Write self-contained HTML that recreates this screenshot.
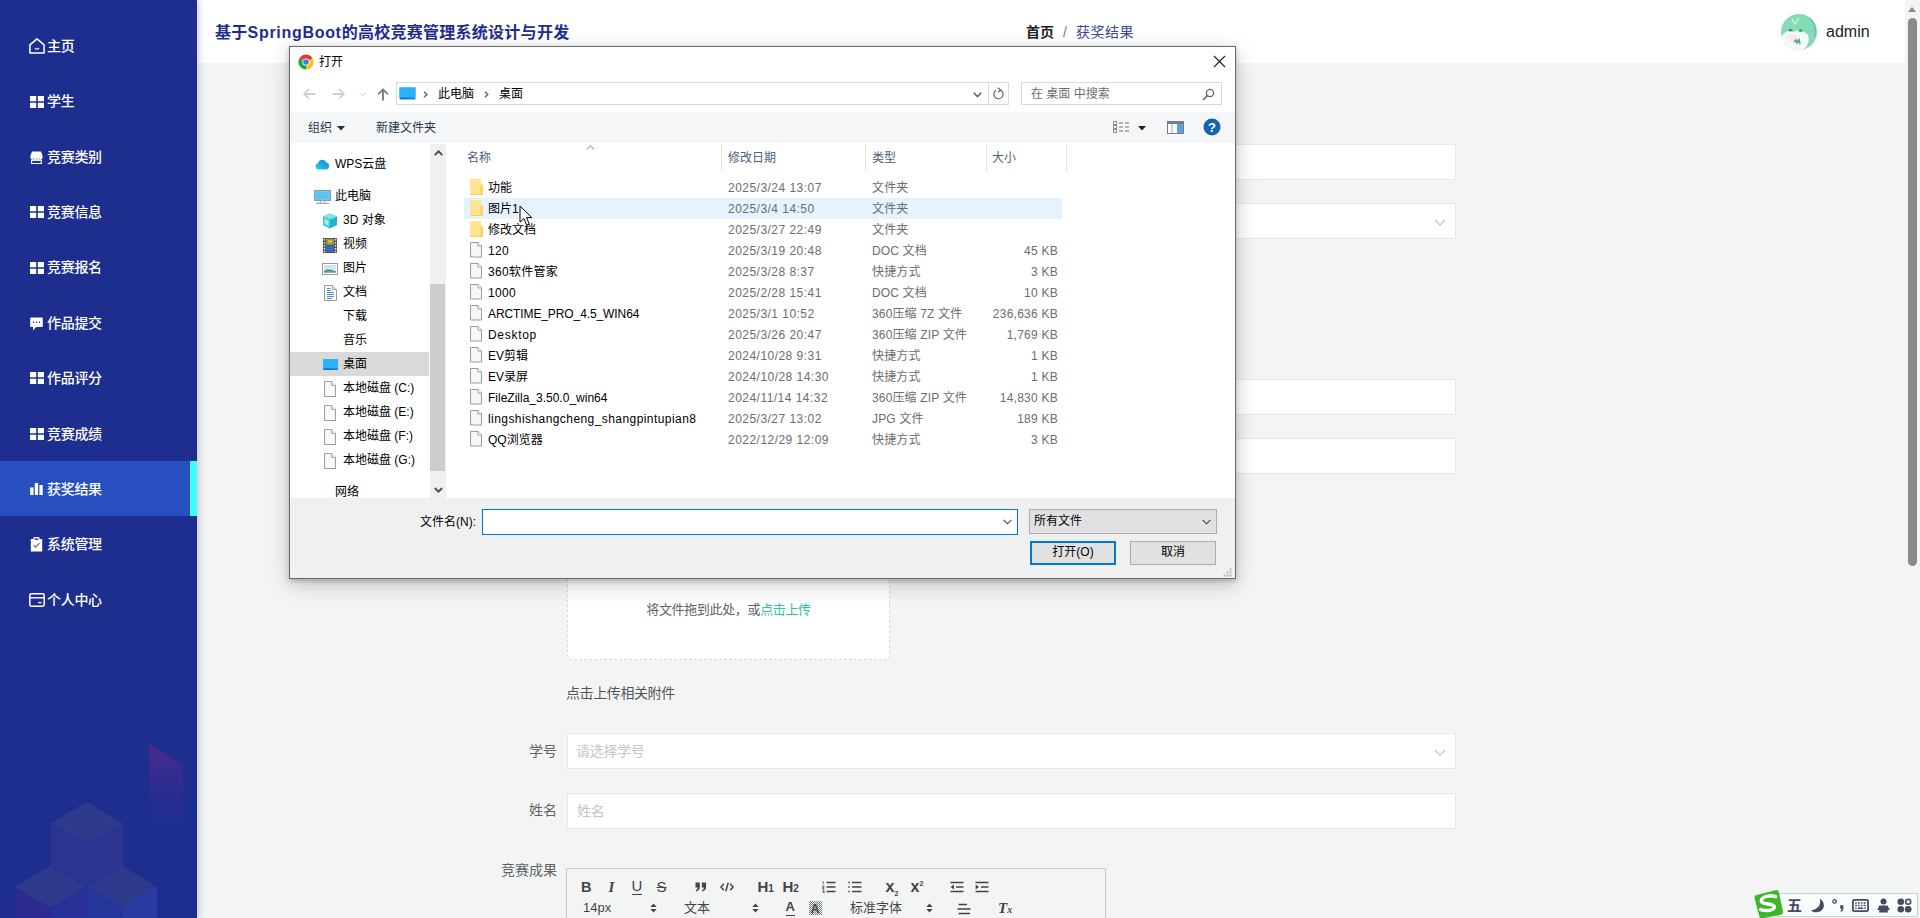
<!DOCTYPE html>
<html lang="zh-CN">
<head>
<meta charset="utf-8">
<title>获奖结果</title>
<style>
*{box-sizing:border-box;margin:0;padding:0}
html,body{width:1920px;height:918px;overflow:hidden;background:#f3f5f5;font-family:"Liberation Sans","Noto Sans CJK SC",sans-serif;}
body{position:relative}
/* ---------- sidebar ---------- */
#side{position:absolute;left:0;top:0;width:197px;height:918px;background:#1e2e8f;overflow:hidden;z-index:3}
#sshadow{position:absolute;left:0;top:0;width:197px;height:918px;box-shadow:2px 0 7px rgba(0,21,41,.2);z-index:3}
#side .mi{position:absolute;left:0;width:197px;height:55px;color:#fff;font-size:14px;line-height:55px;font-weight:500;white-space:nowrap;letter-spacing:-0.3px}
#side .mi svg{position:absolute;fill:#fff}
#side .mi span{position:absolute;left:47px;top:0}
#side .mi.on{background:#274fbf}
#side .mi.on:after{content:"";position:absolute;right:0;top:0;width:7px;height:55px;background:#3dfffb}
/* ---------- header ---------- */
#head{position:absolute;left:197px;top:0;width:1708px;height:63px;background:#fff;z-index:2}
#head .title{position:absolute;left:18px;top:0;line-height:65px;font-size:16px;font-weight:bold;color:#1e2e8f;white-space:nowrap;letter-spacing:.27px}
#head .bc{position:absolute;left:829px;top:0;line-height:64px;font-size:14px;white-space:nowrap;color:#303133}
#head .bc b{font-weight:bold;color:#222}
#head .bc i{font-style:normal;color:#777;margin:0 9px 0 9px}
#head .bc em{font-style:normal;color:#3f4898;letter-spacing:.55px}
#head .user{position:absolute;left:1629px;top:0;line-height:64px;font-size:16px;color:#222}
#head .ava{position:absolute;left:1584px;top:14px;width:36px;height:36px}
/* ---------- page scrollbar ---------- */
#sb{position:absolute;left:1905px;top:0;width:15px;height:918px;background:#f4f4f4;z-index:2}
#sb .th{position:absolute;left:3px;top:18px;width:9px;height:548px;border-radius:5px;background:#8a8a8a}
#sb .up{position:absolute;left:3px;top:7px;width:0;height:0;border-left:4.5px solid transparent;border-right:4.5px solid transparent;border-bottom:5px solid #8a8a8a}
/* ---------- form ---------- */
.inp{position:absolute;left:567px;width:889px;height:36px;background:#fff;border:1px solid #e6e9ec;font-size:14px;color:#c3c6cc;line-height:34px;padding-left:9px;letter-spacing:-0.3px}
.lbl{position:absolute;width:120px;text-align:right;font-size:14px;color:#606266;line-height:36px;white-space:nowrap}
.chev{position:absolute;right:9px;top:15px;width:12px;height:7px}

.drag{position:absolute;left:567px;top:480px;width:323px;height:180px;background:#fff;border:1px dashed #d9d9d9;border-radius:6px;text-align:center;font-size:13px;color:#606266}
.drag span{position:absolute;left:0;width:321px;top:120px;line-height:18px;letter-spacing:-0.35px}
.drag em{font-style:normal;color:#2fc49a}
.tip{position:absolute;left:566px;top:683px;font-size:14px;line-height:20px;color:#555;letter-spacing:-0.4px}
#ed{position:absolute;left:566px;top:868px;width:540px;height:60px;border:1px solid #ccc}
#ed svg{position:absolute}
#ed span{position:absolute;font-size:14px;color:#444;line-height:20px;white-space:nowrap}
#ed small{font-size:10px}
#ed sub,#ed sup{font-size:7px;line-height:0}
#ime{position:absolute;left:1777px;top:893px;width:141px;height:24px;background:#f9fcfc;border:1px solid #c5d3d8;z-index:4}
#ime svg,#ime span{position:absolute}
/* ---------- dialog ---------- */
#dlg{position:absolute;left:289px;top:46px;width:947px;height:533px;background:#fff;border:1px solid #6b6b6b;box-shadow:0 2px 5px rgba(0,0,0,.22),0 6px 20px rgba(0,0,0,.2);z-index:10;font-size:12px;color:#000;font-family:"Liberation Sans","Noto Sans CJK SC",sans-serif}
#dlg *{position:absolute;white-space:nowrap}
#dlg .ttl{left:29px;top:6px;line-height:18px;font-size:12px}
#dlg .addr{left:106px;top:35px;width:593px;height:23px;border:1px solid #d9d9d9;background:#fff}
#dlg .rfr{left:698px;top:35px;width:21px;height:23px;border:1px solid #d9d9d9;background:#fff}
#dlg .srch{left:731px;top:35px;width:201px;height:23px;border:1px solid #d9d9d9;background:#fff}
#dlg .srch span{left:9px;top:2px;line-height:18px;color:#6d6d6d}
#dlg .tb{left:0;top:65px;width:945px;height:31px;background:#f5f6f7}
#dlg .tb span{top:7px;line-height:18px;color:#27364f}
#dlg .tree{left:0;top:97px;width:140px;height:354px;overflow:hidden;background:#fff}
#dlg .ti{left:0;width:139px;height:24px;line-height:23px}
#dlg .ti.sel{background:#d9d9d9;box-shadow:0 -1px 0 #d9d9d9;height:23px}
#dlg .ti span{top:0}
#dlg .tsb{left:140px;top:97px;width:16px;height:354px;background:#f0f0f0}
#dlg .tsb .th{left:0;top:140px;width:15px;height:187px;background:#cdcdcd}
#dlg .hdr{top:98px;height:28px;line-height:26px;color:#4c607a}
#dlg .sep{top:97px;width:1px;height:28px;background:#e5e5e5}
#dlg .row{left:174px;width:598px;height:21px;line-height:22px}
#dlg .row.hl{background:#e5f3ff}
#dlg .row .ic{left:6px;top:2px;width:13px;height:16px}
#dlg .row .n{left:24px;top:0;color:#000}
#dlg .row .d{left:264px;top:0;color:#6d6d6d;letter-spacing:.47px}
#dlg .row .t{left:408px;top:0;color:#6d6d6d;letter-spacing:.15px}
#dlg .row .s{right:4px;top:0;color:#6d6d6d;letter-spacing:.25px}
#dlg .bot{left:0;top:451px;width:945px;height:80px;background:#f0f0f0}
#dlg .fnl{left:130px;top:466px;line-height:18px}
#dlg .fni{left:192px;top:462px;width:536px;height:26px;border:1px solid #0078d7;background:#fff}
#dlg .flt{left:739px;top:462px;width:188px;height:25px;border:1px solid #adadad;background:#e1e1e1}
#dlg .flt span{left:4px;top:2px;line-height:18px}
#dlg .btn{top:494px;width:86px;height:24px;background:#e1e1e1;border:1px solid #adadad;text-align:center;line-height:21px}
#dlg .btn.def{border:2px solid #0078d7;line-height:19px}
</style>
</head>
<body>
<!-- SIDEBAR -->
<div id="sshadow"></div>
<div id="side">
  <div class="mi" style="top:18.5px"><svg viewBox="0 0 16 16" style="left:29px;top:19.5px;width:16px;height:16px"><path d="M8 0.9L0.9 6.9V15.1H15.1V6.9Z" fill="none" stroke="#fff" stroke-width="1.5" stroke-linejoin="round"/><path d="M6.2 10.4Q8 11.8 9.8 10.4" fill="none" stroke="#fff" stroke-width="1.2" stroke-linecap="round"/></svg><span>主页</span></div>
  <div class="mi" style="top:74px"><svg viewBox="0 0 14 12" style="left:30px;top:21.5px;width:14px;height:12px"><path d="M0 0h6.2v5.2H0zM7.8 0H14v5.2H7.8zM0 6.8h6.2V12H0zM7.8 6.8H14V12H7.8z"/></svg><span>学生</span></div>
  <div class="mi" style="top:129.5px"><svg viewBox="0 0 13 13" style="left:30px;top:21px;width:13px;height:13px"><path d="M2 0.5h9l1.6 4.2v2.1a1.6 1.6 0 0 1-3.1 0.4a1.6 1.6 0 0 1-3 0a1.6 1.6 0 0 1-3 0a1.6 1.6 0 0 1-3.1-0.4V4.7z"/><path d="M1.6 9.2h9.8v3.3H1.6z" fill="none" stroke="#fff" stroke-width="1.2"/><path d="M2.2 8.4h8.6v1.2H2.2z"/></svg><span>竞赛类别</span></div>
  <div class="mi" style="top:184.5px"><svg viewBox="0 0 14 12" style="left:30px;top:21.5px;width:14px;height:12px"><path d="M0 0h6.2v5.2H0zM7.8 0H14v5.2H7.8zM0 6.8h6.2V12H0zM7.8 6.8H14V12H7.8z"/></svg><span>竞赛信息</span></div>
  <div class="mi" style="top:240px"><svg viewBox="0 0 14 12" style="left:30px;top:21.5px;width:14px;height:12px"><path d="M0 0h6.2v5.2H0zM7.8 0H14v5.2H7.8zM0 6.8h6.2V12H0zM7.8 6.8H14V12H7.8z"/></svg><span>竞赛报名</span></div>
  <div class="mi" style="top:295.5px"><svg viewBox="0 0 13 14" style="left:30px;top:21px;width:13px;height:14px"><path d="M1.2 0.5h10.6a1 1 0 0 1 1 1v7.6a1 1 0 0 1-1 1H6.2L3 13.4V10.1H1.2a1 1 0 0 1-1-1V1.5a1 1 0 0 1 1-1z"/><circle cx="3.6" cy="5.3" r="0.8" fill="#1e2e8f"/><circle cx="6.5" cy="5.3" r="0.8" fill="#1e2e8f"/><circle cx="9.4" cy="5.3" r="0.8" fill="#1e2e8f"/></svg><span>作品提交</span></div>
  <div class="mi" style="top:350.5px"><svg viewBox="0 0 14 12" style="left:30px;top:21.5px;width:14px;height:12px"><path d="M0 0h6.2v5.2H0zM7.8 0H14v5.2H7.8zM0 6.8h6.2V12H0zM7.8 6.8H14V12H7.8z"/></svg><span>作品评分</span></div>
  <div class="mi" style="top:406.5px"><svg viewBox="0 0 14 12" style="left:30px;top:21.5px;width:14px;height:12px"><path d="M0 0h6.2v5.2H0zM7.8 0H14v5.2H7.8zM0 6.8h6.2V12H0zM7.8 6.8H14V12H7.8z"/></svg><span>竞赛成绩</span></div>
  <div class="mi on" style="top:461px;line-height:56px"><svg viewBox="0 0 13 12" style="left:30px;top:22px;width:13px;height:12px"><path d="M0.2 4.6h3.3V12H0.2zM4.8 0h3.3v12H4.8zM9.4 2h3.3v10H9.4z"/></svg><span>获奖结果</span></div>
  <div class="mi" style="top:516.5px"><svg viewBox="0 0 13 15" style="left:30px;top:20px;width:13px;height:15px"><path d="M0.8 2h2.6V1a1 1 0 0 1 1-1h4.2a1 1 0 0 1 1 1v1h2.6v12.6H0.8z"/><path d="M4.6 1.4h3.8v1.4H4.6z" fill="#1e2e8f"/><path d="M3.6 8.2l2 2l3.9-4" fill="none" stroke="#5a64b0" stroke-width="1.2"/></svg><span>系统管理</span></div>
  <div class="mi" style="top:572.5px"><svg viewBox="0 0 16 14" style="left:29px;top:20.5px;width:16px;height:14px"><rect x="0.8" y="0.8" width="14.4" height="12.4" rx="1.6" fill="none" stroke="#fff" stroke-width="1.5"/><path d="M1 4.8H15" stroke="#fff" stroke-width="1.4"/><path d="M9.2 9.6h3.2" stroke="#fff" stroke-width="1.4"/></svg><span>个人中心</span></div>
  <svg style="position:absolute;left:0;top:730px;width:197px;height:188px" viewBox="0 730 197 188">
    <defs><linearGradient id="pg" x1="0" y1="0" x2="0" y2="1"><stop offset="0" stop-color="#5a2a8c" stop-opacity=".75"/><stop offset="1" stop-color="#3a2a90" stop-opacity="0"/></linearGradient></defs>
    <path d="M149 744L183 764V826H149Z" fill="url(#pg)"/>
    <path d="M86.7 802L122.8 823.5L86.7 843L50.6 823.5Z" fill="#2e3a8c"/>
    <path d="M50.6 823.5L86.7 843V886L50.6 866Z" fill="#2c3390"/>
    <path d="M122.8 823.5L86.7 843V886L122.8 866Z" fill="#2d3591"/>
    <path d="M50.6 866L86.7 887L50.6 908L14.5 887Z" fill="#2e3a8c"/>
    <path d="M14.5 887L50.6 908V930H14.5Z" fill="#2c2b92"/>
    <path d="M86.7 887L50.6 908V930H86.7Z" fill="#2a309a"/>
    <path d="M122.8 866L157 887L122.8 908L86.7 887Z" fill="#2e3a8c"/>
    <path d="M86.7 887L122.8 908V930H86.7Z" fill="#27369c"/>
    <path d="M157 887L122.8 908V930H157Z" fill="#2a3ba2"/>
  </svg>
</div>
<!-- HEADER -->
<div id="head">
  <div class="title">基于<span style="letter-spacing:.7px">SpringBoot</span>的高校竞赛管理系统设计与开发</div>
  <div class="bc"><b>首页</b><i>/</i><em>获奖结果</em></div>
  <svg class="ava" viewBox="0 0 36 36"><defs><clipPath id="ac"><circle cx="18" cy="18" r="18"/></clipPath><radialGradient id="ag" cx=".6" cy=".3" r=".8"><stop offset="0" stop-color="#7fe0ae"/><stop offset="1" stop-color="#8fd3c0"/></radialGradient></defs><g clip-path="url(#ac)"><rect width="36" height="36" fill="url(#ag)"/><path d="M1 22C4 17 9 16 13 18C16 15 22 16 27 21C29 26 27 32 22 36H6C2 32 0 27 1 22Z" fill="#f3fbf8"/><ellipse cx="12" cy="24" rx="7" ry="4" fill="#fbe9ea" opacity=".8"/><ellipse cx="9.5" cy="16.2" rx="2.2" ry="1.3" fill="#3f8f84"/><ellipse cx="19.5" cy="16.6" rx="2.2" ry="1.3" fill="#4a9a8c"/><path d="M13 28l2-2l1 3l2-3l1 4" stroke="#4fa58f" stroke-width="1.6" fill="none"/><path d="M11 5l3 5l4-6" stroke="#c9f0dc" stroke-width="1.5" fill="none"/><path d="M28 3C33 7 35 14 34 22" stroke="#7cc0b0" stroke-width="2" fill="none"/></g></svg>
  <div class="user">admin</div>
</div>
<div id="sb"><div class="up"></div><div class="th"></div></div>
<!-- FORM -->
<div id="form">
  <div class="inp" style="top:144px"></div>
  <div class="inp" style="top:203px"><svg class="chev" viewBox="0 0 12 7"><path d="M1 1L6 6L11 1" fill="none" stroke="#c6c8cc" stroke-width="1.3"/></svg></div>
  <div class="inp" style="top:379px"></div>
  <div class="inp" style="top:438px"></div>
  <div class="drag"><span>将文件拖到此处，或<em>点击上传</em></span></div>
  <div class="tip">点击上传相关附件</div>
  <div class="lbl" style="left:437px;top:733px">学号</div>
  <div class="inp" style="top:733px;padding-left:8px">请选择学号<svg class="chev" viewBox="0 0 12 7"><path d="M1 1L6 6L11 1" fill="none" stroke="#c6c8cc" stroke-width="1.3"/></svg></div>
  <div class="lbl" style="left:437px;top:792px">姓名</div>
  <div class="inp" style="top:793px">姓名</div>
  <div class="lbl" style="left:437px;top:852px">竞赛成果</div>
<div id="ed">
  <span style="left:14px;top:7.5px;font-weight:bold;font-size:14.5px">B</span>
  <span style="left:41.5px;top:7.5px;font-style:italic;font-weight:bold;font-size:15px;font-family:'Liberation Serif',serif">I</span>
  <span style="left:64.5px;top:7.5px;font-size:15px;border-bottom:1px solid #444;line-height:17px;top:8px">U</span>
  <span style="left:89.5px;top:7.5px;font-size:15px;text-decoration:line-through">S</span>
  <svg style="left:128px;top:13px;width:12px;height:10px" viewBox="0 0 12 10"><path d="M0.5 0.5h4.3v4.3c0 2.6-1.4 4.2-3.6 4.7l-0.5-1.3c1.2-0.4 1.8-1.2 1.9-2.6H0.5zM6.8 0.5h4.3v4.3c0 2.6-1.4 4.2-3.6 4.7l-0.5-1.3c1.2-0.4 1.8-1.2 1.9-2.6H6.8z" fill="#444"/></svg>
  <svg style="left:152.5px;top:13px;width:14px;height:10px" viewBox="0 0 14 10"><path d="M3.8 1.8L0.9 5L3.8 8.2M10.2 1.8L13.1 5L10.2 8.2M8.2 0.8L5.8 9.2" stroke="#444" fill="none" stroke-width="1.5"/></svg>
  <span style="left:190.5px;top:7.5px;font-weight:bold;font-size:15px">H<small>1</small></span>
  <span style="left:215.5px;top:7.5px;font-weight:bold;font-size:15px">H<small>2</small></span>
  <svg style="left:254.5px;top:12px;width:14px;height:12px" viewBox="0 0 14 12"><path d="M4.5 1.5H13.5M4.5 6H13.5M4.5 10.5H13.5" stroke="#444" fill="none" stroke-width="1.5"/><path d="M1.2 0.2V3M0.4 4.8H2V6.3H0.6V7.5H2.2M0.4 9H2V12H0.4M0.8 10.5H2" stroke="#444" fill="none" stroke-width="0.8"/></svg>
  <svg style="left:280.5px;top:12px;width:14px;height:12px" viewBox="0 0 14 12"><path d="M4 1.5H13.5M4 6H13.5M4 10.5H13.5M0.3 1.5H1.8M0.3 6H1.8M0.3 10.5H1.8" stroke="#444" fill="none" stroke-width="1.5"/></svg>
  <span style="left:318.5px;top:7.5px;font-weight:bold;font-size:16px">x<sub>2</sub></span>
  <span style="left:343.5px;top:7.5px;font-weight:bold;font-size:16px">x<sup>2</sup></span>
  <svg style="left:382.5px;top:12px;width:14px;height:12px" viewBox="0 0 14 12"><path d="M0.5 1.5H13.5M6 6H13.5M0.5 10.5H13.5" stroke="#444" fill="none" stroke-width="1.5"/><path d="M4 3.6V8.4L0.6 6Z" fill="#444"/></svg>
  <svg style="left:407.5px;top:12px;width:14px;height:12px" viewBox="0 0 14 12"><path d="M0.5 1.5H13.5M6 6H13.5M0.5 10.5H13.5" stroke="#444" fill="none" stroke-width="1.5"/><path d="M0.6 3.6V8.4L4 6Z" fill="#444"/></svg>
  <span style="left:16px;top:29px;font-size:13px">14px</span>
  <svg style="left:83px;top:34px;width:7px;height:10px" viewBox="0 0 7 10"><path d="M0.3 4L3.5 0.4L6.7 4ZM0.3 6L3.5 9.6L6.7 6Z" fill="#444"/></svg>
  <span style="left:117px;top:29px;font-size:13px">文本</span>
  <svg style="left:185px;top:34px;width:7px;height:10px" viewBox="0 0 7 10"><path d="M0.3 4L3.5 0.4L6.7 4ZM0.3 6L3.5 9.6L6.7 6Z" fill="#444"/></svg>
  <span style="left:218.5px;top:29.5px;font-weight:bold;font-size:13px;border-bottom:1px solid #444;line-height:16px">A</span>
  <span style="left:241.5px;top:32px;font-weight:bold;font-size:12px;width:13px;height:14px;line-height:16px;text-align:center;background:repeating-conic-gradient(#777 0% 25%, transparent 0% 50%) 0 0/2px 2px">A</span>
  <span style="left:283px;top:29px;font-size:13px">标准字体</span>
  <svg style="left:359px;top:34px;width:7px;height:10px" viewBox="0 0 7 10"><path d="M0.3 4L3.5 0.4L6.7 4ZM0.3 6L3.5 9.6L6.7 6Z" fill="#444"/></svg>
  <svg style="left:390px;top:34px;width:14px;height:12px" viewBox="0 0 14 12"><path d="M1.5 1.5H10M0.5 6H13.5M1.5 10.5H13" stroke="#444" fill="none" stroke-width="1.5"/></svg>
  <span style="left:431px;top:28.5px;font-style:italic;font-size:15px;font-family:'Liberation Serif',serif;font-weight:bold">T<small>x</small></span>
</div>
</div>
<div id="ime">
  <svg style="left:-25px;top:-5px;width:31px;height:30px" viewBox="0 0 31 30"><path d="M5.5 5.5L22.5 1.2Q25.2 0.6 25.9 3.2L30 22.5Q30.5 25 28 25.7L9.5 29.3Q7 29.8 6.3 27.2L1.6 9.5Q1 6.6 3.6 6Z" fill="#3db62a"/><path d="M22.8 7.6C17 5.6 8.8 7.4 8.3 11.6C7.8 15.8 21.8 14.2 21.4 18.2C21 21.6 13 22.4 7.6 20.6" stroke="#fff" stroke-width="3.4" fill="none" stroke-linecap="round"/></svg>
  <span style="left:9px;top:2px;font-size:15px;line-height:20px;font-weight:bold;color:#474a5c">五</span>
  <svg style="left:32px;top:4px;width:15px;height:15px" viewBox="0 0 15 15"><path d="M9.6 0.6C11.6 5.6 8.6 11.2 1 12.4C4 15.2 10.4 15 13 10.8C15 7.2 13.4 2.6 9.6 0.6Z" fill="#474a5c"/></svg>
  <svg style="left:54px;top:4px;width:13px;height:15px" viewBox="0 0 13 15"><circle cx="2.6" cy="3.4" r="1.7" fill="none" stroke="#474a5c" stroke-width="1.3"/><path d="M8.2 7.2h3.2v3.2c0 1.8-1 3-2.6 3.4l-0.4-1c0.9-0.4 1.3-1 1.4-2H8.2z" fill="#474a5c"/></svg>
  <svg style="left:74px;top:5px;width:17px;height:13px" viewBox="0 0 17 13"><rect x="0.9" y="0.9" width="15.2" height="11.2" rx="1.6" fill="none" stroke="#474a5c" stroke-width="1.8"/><path d="M3.2 4h1.6M6 4h1.6M8.8 4h1.6M11.6 4h2M3.2 6.6h1.6M6 6.6h1.6M8.8 6.6h1.6M11.6 6.6h2M3.2 9.3h1.4M5.8 9.3h5.4M12.4 9.3h1.4" stroke="#474a5c" stroke-width="1.5" fill="none"/></svg>
  <svg style="left:99px;top:4px;width:13px;height:15px" viewBox="0 0 13 15"><circle cx="6.5" cy="3.4" r="3" fill="#474a5c"/><path d="M2.4 7.4h8.2l2.2 4.6h-2.2l0.4 2.6H2l0.4-2.6H0.2z" fill="#474a5c"/></svg>
  <svg style="left:119px;top:4px;width:15px;height:15px" viewBox="0 0 15 15"><circle cx="3.8" cy="3.8" r="3.3" fill="#474a5c"/><circle cx="11.2" cy="3.8" r="2.5" fill="none" stroke="#474a5c" stroke-width="1.6"/><circle cx="3.8" cy="11.2" r="3.3" fill="#474a5c"/><circle cx="11.2" cy="11.2" r="3.3" fill="#474a5c"/></svg>
</div>
<!-- DIALOG -->
<div id="dlg">
  <!-- title bar -->
  <svg style="left:8px;top:7px;width:16px;height:16px" viewBox="0 0 16 16">
    <circle cx="8" cy="8" r="7.6" fill="#fff"/>
    <path d="M8 8 L1.42 4.2 A7.6 7.6 0 0 1 14.58 4.2 Z" fill="#e33b2e"/>
    <path d="M8 8 L14.58 4.2 A7.6 7.6 0 0 1 8 15.6 Z" fill="#fbc116"/>
    <path d="M8 8 L8 15.6 A7.6 7.6 0 0 1 1.42 4.2 Z" fill="#2aa148"/>
    <circle cx="8" cy="8" r="3.6" fill="#fff"/>
    <circle cx="8" cy="8" r="2.8" fill="#3c7fe8"/>
  </svg>
  <div class="ttl">打开</div>
  <svg style="left:923px;top:8px;width:13px;height:13px" viewBox="0 0 13 13"><path d="M1 1L12 12M12 1L1 12" stroke="#222" stroke-width="1.2" fill="none"/></svg>
  <!-- nav row -->
  <svg style="left:13px;top:41px;width:13px;height:12px" viewBox="0 0 13 12"><path d="M12.5 6H1.5M6 1.2L1.2 6L6 10.8" stroke="#d0d0d0" stroke-width="1.8" fill="none"/></svg>
  <svg style="left:42px;top:41px;width:13px;height:12px" viewBox="0 0 13 12"><path d="M0.5 6H11.5M7 1.2L11.8 6L7 10.8" stroke="#d0d0d0" stroke-width="1.8" fill="none"/></svg>
  <svg style="left:69px;top:45px;width:7px;height:5px" viewBox="0 0 7 5"><path d="M0.5 0.8L3.5 3.8L6.5 0.8" stroke="#cfcfcf" stroke-width="1" fill="none"/></svg>
  <svg style="left:87px;top:41px;width:12px;height:13px" viewBox="0 0 12 13"><path d="M6 12.5V1.8M1.2 6.2L6 1.4L10.8 6.2" stroke="#777" stroke-width="1.8" fill="none"/></svg>
  <div class="addr">
    <svg style="left:2px;top:4px;width:17px;height:13px" viewBox="0 0 17 13"><rect x="0.5" y="0.5" width="16" height="12" fill="#1ea0f0"/><rect x="0.5" y="0.5" width="16" height="9.6" fill="#2cb0ff"/><rect x="1.5" y="10.8" width="9" height="1" fill="#0b5fa8"/><rect x="12" y="10.8" width="1" height="1" fill="#0b5fa8"/><rect x="14" y="10.8" width="1" height="1" fill="#0b5fa8"/></svg>
    <svg style="left:26px;top:8px;width:5px;height:7px" viewBox="0 0 5 7"><path d="M1 0.7L3.8 3.5L1 6.3" stroke="#6a6a6a" stroke-width="1.5" fill="none"/></svg>
    <span style="left:41px;top:2px;line-height:18px">此电脑</span>
    <svg style="left:87px;top:8px;width:5px;height:7px" viewBox="0 0 5 7"><path d="M1 0.7L3.8 3.5L1 6.3" stroke="#6a6a6a" stroke-width="1.5" fill="none"/></svg>
    <span style="left:102px;top:2px;line-height:18px">桌面</span>
    <svg style="left:576px;top:9px;width:9px;height:6px" viewBox="0 0 9 6"><path d="M0.8 0.8L4.5 4.6L8.2 0.8" stroke="#444" stroke-width="1.3" fill="none"/></svg>
  </div>
  <div class="rfr"><svg style="left:3px;top:4px;width:13px;height:14px" viewBox="0 0 13 14"><path d="M8.2 2.9A4.6 4.6 0 1 1 4 3.3" stroke="#666" stroke-width="1.2" fill="none"/><path d="M5.8 0.8L8.6 3L5.9 5.3" stroke="#666" stroke-width="1.2" fill="none"/></svg></div>
  <div class="srch"><span>在 桌面 中搜索</span><svg style="left:180px;top:5px;width:13px;height:13px" viewBox="0 0 13 13"><circle cx="8" cy="5" r="3.6" stroke="#666" stroke-width="1.3" fill="none"/><path d="M5.4 7.6L1 12" stroke="#666" stroke-width="1.6" fill="none"/></svg></div>
  <!-- toolbar -->
  <div class="tb">
    <span style="left:18px">组织</span>
    <svg style="left:47px;top:14px;width:8px;height:5px" viewBox="0 0 8 5"><path d="M0 0H8L4 4.6Z" fill="#1d2a4a"/></svg>
    <span style="left:86px">新建文件夹</span>
    <svg style="left:822.5px;top:9px;width:17px;height:13px" viewBox="0 0 17 13"><g fill="none" stroke="#8b8f96" stroke-width="1"><rect x="0.5" y="0.5" width="3" height="3"/><rect x="0.5" y="4.5" width="3" height="3"/><rect x="0.5" y="8.5" width="3" height="3"/></g><g stroke="#6b7079" stroke-width="1"><path d="M6 2H10M12 2H16M6 6H10M12 6H16M6 10H10M12 10H16"/></g></svg>
    <svg style="left:847.5px;top:14px;width:8px;height:5px" viewBox="0 0 8 5"><path d="M0 0H8L4 4.6Z" fill="#222"/></svg>
    <svg style="left:877px;top:9px;width:17px;height:13px" viewBox="0 0 17 13"><rect x="0.5" y="0.5" width="16" height="12" fill="#fff" stroke="#6e7f93"/><rect x="1" y="1" width="15" height="2" fill="#6e7f93"/><rect x="10" y="3" width="6" height="9" fill="#5aa0dc"/><rect x="4.5" y="3" width="1" height="9" fill="#9aa7b5"/></svg>
    <svg style="left:912.5px;top:6px;width:18px;height:18px" viewBox="0 0 18 18"><circle cx="9" cy="9" r="8.5" fill="#1464b4"/><text x="9" y="13.6" font-size="13" font-weight="bold" text-anchor="middle" fill="#fff" font-family="Liberation Sans, sans-serif" style="position:static">?</text></svg>
  </div>
  <!-- tree -->
  <div class="tree">
    <div class="ti" style="top:9px"><span style="left:45px">WPS云盘</span><svg style="left:25px;top:6px;width:15px;height:11px" viewBox="0 0 15 11"><defs><linearGradient id="wg" x1="0" y1="1" x2="1" y2="0"><stop offset="0" stop-color="#1fd3d6"/><stop offset="1" stop-color="#1f7df0"/></linearGradient></defs><path d="M3.4 10.6A3.2 3.2 0 0 1 3 4.3A4.4 4.4 0 0 1 11.4 3.6A3.6 3.6 0 0 1 11.4 10.6Z" fill="url(#wg)"/></svg></div>
    <div class="ti" style="top:41px"><span style="left:45px">此电脑</span><svg style="left:24px;top:5px;width:17px;height:14px" viewBox="0 0 17 14"><rect x="0.5" y="0.5" width="16" height="10" fill="#7fd0f5" stroke="#8a9aa8"/><rect x="1.5" y="1.5" width="14" height="8" fill="#5cc3f2"/><path d="M6.5 11v1.6M10.5 11v1.6" stroke="#9aa6b0" stroke-width="1"/><path d="M2 13.3h13" stroke="#9aa6b0" stroke-width="1.2"/></svg></div>
    <div class="ti" style="top:65px"><span style="left:53px">3D 对象</span><svg style="left:32px;top:4px;width:16px;height:16px" viewBox="0 0 16 16"><path d="M8 0.6L15 3.4V12L8 15.4L1 12V3.4Z" fill="#1fb4c8"/><path d="M8 0.6L15 3.4L8 6.4L1 3.4Z" fill="#7fe5ea"/><path d="M1 3.4L8 6.4V15.4L1 12Z" fill="#3fcfd8"/><path d="M2.6 5.6L6.6 7.4V12.6L2.6 10.8Z" fill="#b8f2f2" opacity=".8"/></svg></div>
    <div class="ti" style="top:89px"><span style="left:53px">视频</span><svg style="left:33px;top:5px;width:14px;height:15px" viewBox="0 0 14 15"><rect x="0" y="0" width="14" height="15" fill="#4a4f58"/><rect x="3" y="0.8" width="8" height="6.2" fill="#7aa340"/><rect x="3" y="8" width="8" height="6.2" fill="#3f67b8"/><path d="M5 2h4v3H5z" fill="#e4b23a"/><g fill="#e8e8e8"><rect x="0.8" y="1" width="1.4" height="1.6"/><rect x="0.8" y="4" width="1.4" height="1.6"/><rect x="0.8" y="7" width="1.4" height="1.6"/><rect x="0.8" y="10" width="1.4" height="1.6"/><rect x="0.8" y="12.8" width="1.4" height="1.4"/><rect x="11.8" y="1" width="1.4" height="1.6"/><rect x="11.8" y="4" width="1.4" height="1.6"/><rect x="11.8" y="7" width="1.4" height="1.6"/><rect x="11.8" y="10" width="1.4" height="1.6"/><rect x="11.8" y="12.8" width="1.4" height="1.4"/></g></svg></div>
    <div class="ti" style="top:113px"><span style="left:53px">图片</span><svg style="left:32px;top:6px;width:16px;height:12px" viewBox="0 0 16 12"><rect x="0.5" y="0.5" width="15" height="11" fill="#fff" stroke="#9a9a9a"/><rect x="2" y="2" width="12" height="8" fill="#cfe6f7"/><path d="M2 8.2C5 5.8 8 6.2 14 8.6V10H2Z" fill="#4a7f8c"/><path d="M2 9C6 7.8 10 8.4 14 9.2V10H2Z" fill="#8fb6a0"/></svg></div>
    <div class="ti" style="top:137px"><span style="left:53px">文档</span><svg style="left:34px;top:4px;width:13px;height:16px" viewBox="0 0 13 16"><path d="M0.5 0.5H8.5L12.5 4.5V15.5H0.5Z" fill="#fff" stroke="#9a9a9a"/><path d="M8.5 0.5V4.5H12.5" fill="#eee" stroke="#9a9a9a"/><path d="M3 3.5H6.5M3 5.5H7M3 7.5H10M3 9.5H10M3 11.5H10M3 13.4H8" stroke="#4a8fd0" stroke-width="1"/></svg></div>
    <div class="ti" style="top:161px"><span style="left:53px">下载</span></div>
    <div class="ti" style="top:185px"><span style="left:53px">音乐</span></div>
    <div class="ti sel" style="top:209px"><span style="left:53px">桌面</span><svg style="left:32.5px;top:5.5px;width:15.5px;height:11.5px" viewBox="0 0 17 13" preserveAspectRatio="none"><rect x="0" y="0" width="17" height="13" fill="#1590e8"/><rect x="0" y="0" width="17" height="10.4" fill="#2cb0ff"/><rect x="1.5" y="11" width="9" height="1" fill="#0b5fa8"/><rect x="12" y="11" width="1" height="1" fill="#0b5fa8"/><rect x="14" y="11" width="1" height="1" fill="#0b5fa8"/></svg></div>
    <div class="ti" style="top:233px"><span style="left:53px">本地磁盘 (C:)</span><svg style="left:34px;top:4px;width:12px;height:16px" viewBox="0 0 12 16"><path d="M0.5 0.5h7.2l3.8 3.8v11.2h-11z" fill="#f8f8f8" stroke="#9b9b9b"/><path d="M7.7 0.5v3.8h3.8" fill="#fff" stroke="#9b9b9b"/></svg></div>
    <div class="ti" style="top:257px"><span style="left:53px">本地磁盘 (E:)</span><svg style="left:34px;top:4px;width:12px;height:16px" viewBox="0 0 12 16"><path d="M0.5 0.5h7.2l3.8 3.8v11.2h-11z" fill="#f8f8f8" stroke="#9b9b9b"/><path d="M7.7 0.5v3.8h3.8" fill="#fff" stroke="#9b9b9b"/></svg></div>
    <div class="ti" style="top:281px"><span style="left:53px">本地磁盘 (F:)</span><svg style="left:34px;top:4px;width:12px;height:16px" viewBox="0 0 12 16"><path d="M0.5 0.5h7.2l3.8 3.8v11.2h-11z" fill="#f8f8f8" stroke="#9b9b9b"/><path d="M7.7 0.5v3.8h3.8" fill="#fff" stroke="#9b9b9b"/></svg></div>
    <div class="ti" style="top:305px"><span style="left:53px">本地磁盘 (G:)</span><svg style="left:34px;top:4px;width:12px;height:16px" viewBox="0 0 12 16"><path d="M0.5 0.5h7.2l3.8 3.8v11.2h-11z" fill="#f8f8f8" stroke="#9b9b9b"/><path d="M7.7 0.5v3.8h3.8" fill="#fff" stroke="#9b9b9b"/></svg></div>
    <div class="ti" style="top:337px"><span style="left:45px">网络</span></div>
  </div>
  <div class="tsb"><div class="th"></div>
    <svg style="left:4px;top:6px;width:9px;height:6px" viewBox="0 0 9 6"><path d="M0.8 5L4.5 1.3L8.2 5" stroke="#505050" stroke-width="1.9" fill="none"/></svg>
    <svg style="left:4px;top:343px;width:9px;height:6px" viewBox="0 0 9 6"><path d="M0.8 1L4.5 4.7L8.2 1" stroke="#505050" stroke-width="1.9" fill="none"/></svg>
  </div>
  <!-- list header -->
  <svg style="left:296px;top:98px;width:9px;height:5px" viewBox="0 0 9 5"><path d="M0.8 4.4L4.5 0.8L8.2 4.4" stroke="#7a7a7a" stroke-width="1" fill="none"/></svg>
  <div class="hdr" style="left:177px">名称</div>
  <div class="sep" style="left:431px"></div>
  <div class="hdr" style="left:438px">修改日期</div>
  <div class="sep" style="left:575px"></div>
  <div class="hdr" style="left:582px">类型</div>
  <div class="sep" style="left:696px"></div>
  <div class="hdr" style="left:702px">大小</div>
  <div class="sep" style="left:776px"></div>
<div class="row" style="top:130px"><svg class="ic" viewBox="0 0 13 16"><path d="M0 0h11.3v16h-11.3z" fill="#ffe593"/><path d="M10 6.6l3-1.6v11h-3z" fill="#ffd466"/><path d="M0 15h13v1h-13z" fill="#f5cf62"/></svg><span class="n">功能</span><span class="d">2025/3/24 13:07</span><span class="t">文件夹</span><span class="s"></span></div>
<div class="row hl" style="top:151px"><svg class="ic" viewBox="0 0 13 16"><path d="M0 0h11.3v16h-11.3z" fill="#ffe593"/><path d="M10 6.6l3-1.6v11h-3z" fill="#ffd466"/><path d="M0 15h13v1h-13z" fill="#f5cf62"/></svg><span class="n">图片1</span><span class="d">2025/3/4 14:50</span><span class="t">文件夹</span><span class="s"></span></div>
<div class="row" style="top:172px"><svg class="ic" viewBox="0 0 13 16"><path d="M0 0h11.3v16h-11.3z" fill="#ffe593"/><path d="M10 6.6l3-1.6v11h-3z" fill="#ffd466"/><path d="M0 15h13v1h-13z" fill="#f5cf62"/></svg><span class="n">修改文档</span><span class="d">2025/3/27 22:49</span><span class="t">文件夹</span><span class="s"></span></div>
<div class="row" style="top:193px"><svg class="ic" viewBox="0 0 13 16"><path d="M0.5 0.5h7.5l3.5 3.5v11h-11z" fill="#f7f7f7" stroke="#9b9b9b" stroke-width="1"/><path d="M8 0.5v3.5h3.5" fill="#fff" stroke="#9b9b9b" stroke-width="1"/></svg><span class="n" style="letter-spacing:0.35px">120</span><span class="d">2025/3/19 20:48</span><span class="t">DOC 文档</span><span class="s">45 KB</span></div>
<div class="row" style="top:214px"><svg class="ic" viewBox="0 0 13 16"><path d="M0.5 0.5h7.5l3.5 3.5v11h-11z" fill="#f7f7f7" stroke="#9b9b9b" stroke-width="1"/><path d="M8 0.5v3.5h3.5" fill="#fff" stroke="#9b9b9b" stroke-width="1"/></svg><span class="n" style="letter-spacing:0.3px">360软件管家</span><span class="d">2025/3/28 8:37</span><span class="t">快捷方式</span><span class="s">3 KB</span></div>
<div class="row" style="top:235px"><svg class="ic" viewBox="0 0 13 16"><path d="M0.5 0.5h7.5l3.5 3.5v11h-11z" fill="#f7f7f7" stroke="#9b9b9b" stroke-width="1"/><path d="M8 0.5v3.5h3.5" fill="#fff" stroke="#9b9b9b" stroke-width="1"/></svg><span class="n" style="letter-spacing:0.35px">1000</span><span class="d">2025/2/28 15:41</span><span class="t">DOC 文档</span><span class="s">10 KB</span></div>
<div class="row" style="top:256px"><svg class="ic" viewBox="0 0 13 16"><path d="M0.5 0.5h7.5l3.5 3.5v11h-11z" fill="#f7f7f7" stroke="#9b9b9b" stroke-width="1"/><path d="M8 0.5v3.5h3.5" fill="#fff" stroke="#9b9b9b" stroke-width="1"/></svg><span class="n" style="letter-spacing:-0.1px">ARCTIME_PRO_4.5_WIN64</span><span class="d">2025/3/1 10:52</span><span class="t">360压缩 7Z 文件</span><span class="s">236,636 KB</span></div>
<div class="row" style="top:277px"><svg class="ic" viewBox="0 0 13 16"><path d="M0.5 0.5h7.5l3.5 3.5v11h-11z" fill="#f7f7f7" stroke="#9b9b9b" stroke-width="1"/><path d="M8 0.5v3.5h3.5" fill="#fff" stroke="#9b9b9b" stroke-width="1"/></svg><span class="n" style="letter-spacing:0.7px">Desktop</span><span class="d">2025/3/26 20:47</span><span class="t">360压缩 ZIP 文件</span><span class="s">1,769 KB</span></div>
<div class="row" style="top:298px"><svg class="ic" viewBox="0 0 13 16"><path d="M0.5 0.5h7.5l3.5 3.5v11h-11z" fill="#f7f7f7" stroke="#9b9b9b" stroke-width="1"/><path d="M8 0.5v3.5h3.5" fill="#fff" stroke="#9b9b9b" stroke-width="1"/></svg><span class="n">EV剪辑</span><span class="d">2024/10/28 9:31</span><span class="t">快捷方式</span><span class="s">1 KB</span></div>
<div class="row" style="top:319px"><svg class="ic" viewBox="0 0 13 16"><path d="M0.5 0.5h7.5l3.5 3.5v11h-11z" fill="#f7f7f7" stroke="#9b9b9b" stroke-width="1"/><path d="M8 0.5v3.5h3.5" fill="#fff" stroke="#9b9b9b" stroke-width="1"/></svg><span class="n">EV录屏</span><span class="d">2024/10/28 14:30</span><span class="t">快捷方式</span><span class="s">1 KB</span></div>
<div class="row" style="top:340px"><svg class="ic" viewBox="0 0 13 16"><path d="M0.5 0.5h7.5l3.5 3.5v11h-11z" fill="#f7f7f7" stroke="#9b9b9b" stroke-width="1"/><path d="M8 0.5v3.5h3.5" fill="#fff" stroke="#9b9b9b" stroke-width="1"/></svg><span class="n">FileZilla_3.50.0_win64</span><span class="d">2024/11/14 14:32</span><span class="t">360压缩 ZIP 文件</span><span class="s">14,830 KB</span></div>
<div class="row" style="top:361px"><svg class="ic" viewBox="0 0 13 16"><path d="M0.5 0.5h7.5l3.5 3.5v11h-11z" fill="#f7f7f7" stroke="#9b9b9b" stroke-width="1"/><path d="M8 0.5v3.5h3.5" fill="#fff" stroke="#9b9b9b" stroke-width="1"/></svg><span class="n" style="letter-spacing:0.43px">lingshishangcheng_shangpintupian8</span><span class="d">2025/3/27 13:02</span><span class="t">JPG 文件</span><span class="s">189 KB</span></div>
<div class="row" style="top:382px"><svg class="ic" viewBox="0 0 13 16"><path d="M0.5 0.5h7.5l3.5 3.5v11h-11z" fill="#f7f7f7" stroke="#9b9b9b" stroke-width="1"/><path d="M8 0.5v3.5h3.5" fill="#fff" stroke="#9b9b9b" stroke-width="1"/></svg><span class="n">QQ浏览器</span><span class="d">2022/12/29 12:09</span><span class="t">快捷方式</span><span class="s">3 KB</span></div>
  <!-- cursor -->
  <svg style="left:229px;top:158px;width:14px;height:22px;z-index:5" viewBox="0 0 14 22"><path d="M1 1V17.2L4.9 13.5L7.7 20.2L10.3 19.1L7.5 12.6H12.8Z" fill="#fff" stroke="#000" stroke-width="1" stroke-linejoin="miter"/></svg>
  <!-- bottom -->
  <div class="bot"></div>
  <div class="fnl">文件名(N):</div>
  <div class="fni"><svg style="left:520px;top:9px;width:9px;height:6px" viewBox="0 0 9 6"><path d="M0.6 0.8L4.5 4.8L8.4 0.8" stroke="#444" stroke-width="1.1" fill="none"/></svg></div>
  <div class="flt"><span>所有文件</span><svg style="left:172px;top:9px;width:9px;height:6px" viewBox="0 0 9 6"><path d="M0.6 0.8L4.5 4.8L8.4 0.8" stroke="#444" stroke-width="1.1" fill="none"/></svg></div>
  <div class="btn def" style="left:740px">打开(O)</div>
  <div class="btn" style="left:840px">取消</div>
  <svg style="left:933px;top:521px;width:9px;height:9px" viewBox="0 0 9 9"><g fill="#b9b9b9"><rect x="6.5" y="0.5" width="2" height="2"/><rect x="3.5" y="3.5" width="2" height="2"/><rect x="6.5" y="3.5" width="2" height="2"/><rect x="0.5" y="6.5" width="2" height="2"/><rect x="3.5" y="6.5" width="2" height="2"/><rect x="6.5" y="6.5" width="2" height="2"/></g></svg>
</div>
</body>
</html>
